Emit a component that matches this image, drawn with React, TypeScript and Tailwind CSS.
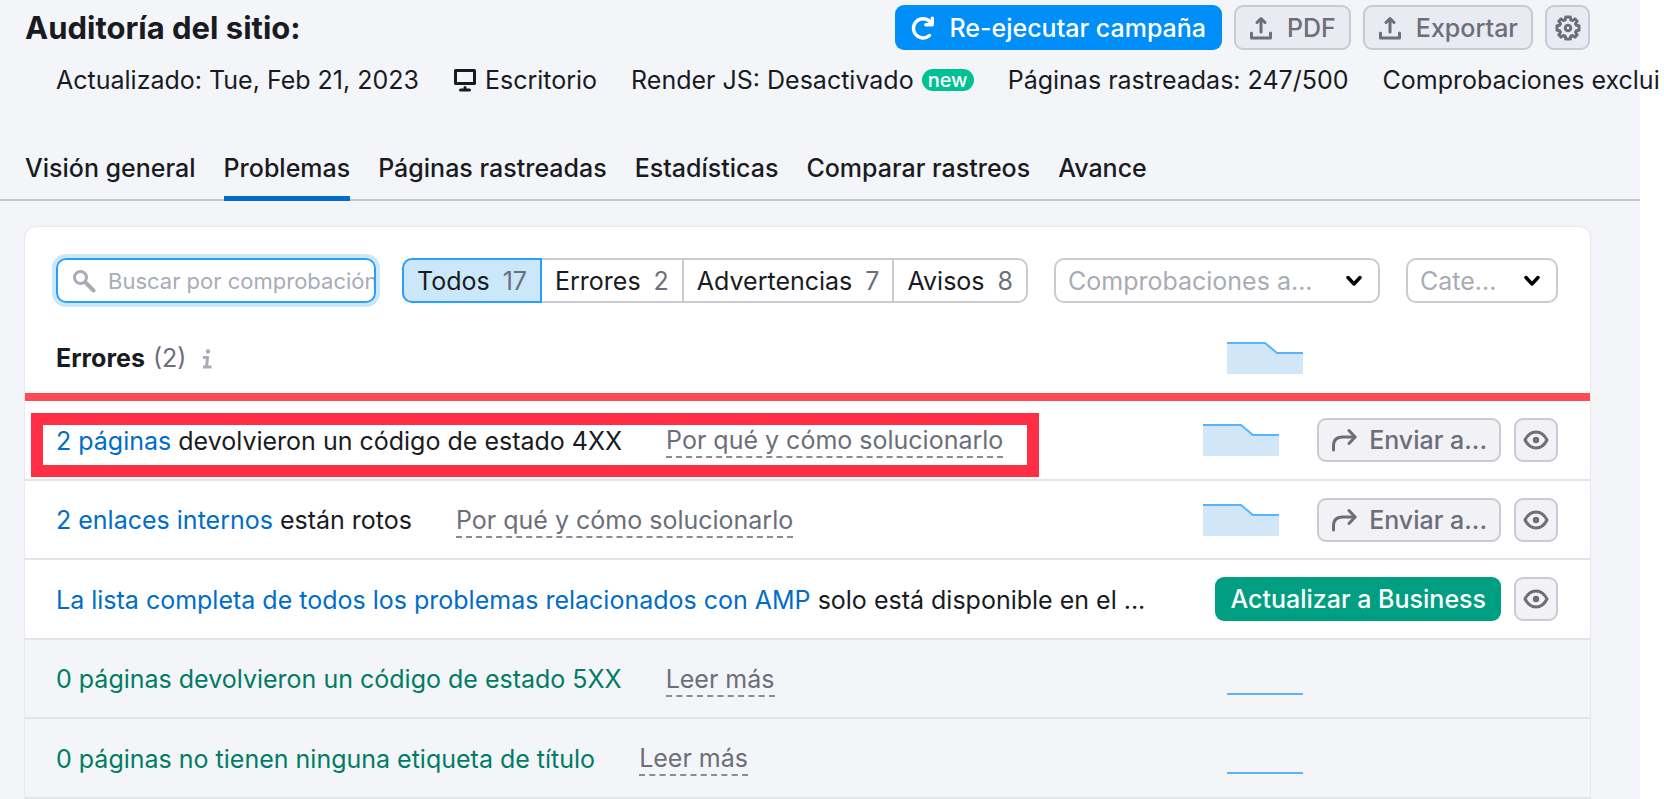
import React from "react";

interface Tab {
  label: string;
  active?: boolean;
}

interface Segment {
  label: string;
  count: number;
  active?: boolean;
}

interface Issue {
  id: number;
  link: string;
  text?: string;
  hint?: string;
  kind: "error" | "upgrade" | "passed";
  marked?: boolean;
}

const tabs: Tab[] = [
  { label: "Visión general" },
  { label: "Problemas", active: true },
  { label: "Páginas rastreadas" },
  { label: "Estadísticas" },
  { label: "Comparar rastreos" },
  { label: "Avance" },
];

const segments: Segment[] = [
  { label: "Todos", count: 17, active: true },
  { label: "Errores", count: 2 },
  { label: "Advertencias", count: 7 },
  { label: "Avisos", count: 8 },
];

const issues: Issue[] = [
  {
    id: 1,
    link: "2 páginas",
    text: "devolvieron un código de estado 4XX",
    hint: "Por qué y cómo solucionarlo",
    kind: "error",
    marked: true,
  },
  {
    id: 2,
    link: "2 enlaces internos",
    text: "están rotos",
    hint: "Por qué y cómo solucionarlo",
    kind: "error",
  },
  {
    id: 3,
    link: "La lista completa de todos los problemas relacionados con AMP",
    text: "solo está disponible en el ...",
    kind: "upgrade",
  },
  {
    id: 4,
    link: "0 páginas devolvieron un código de estado 5XX",
    hint: "Leer más",
    kind: "passed",
  },
  {
    id: 5,
    link: "0 páginas no tienen ninguna etiqueta de título",
    hint: "Leer más",
    kind: "passed",
  },
];

const grayButton =
  "flex items-center justify-center rounded-[9px] border-2 border-[#c9cbd4] font-medium text-[#6c6e79]";

const ReloadIcon = () => (
  <svg width="24" height="24" viewBox="0 0 24 24" fill="none" stroke="currentColor" strokeWidth="3.4" strokeLinecap="round">
    <path d="M18.500 19.500A9.600 9.600 0 1 1 18.800 5.500" />
    <path d="M21.300 2.200V8.800H14.800" strokeLinejoin="round" />
  </svg>
);

const UploadIcon = () => (
  <svg width="24" height="24" viewBox="0 0 24 24" fill="none" stroke="currentColor" strokeWidth="3" strokeLinecap="round" strokeLinejoin="round">
    <path d="M2.500 17v5h19v-5" />
    <path d="M12 16V3M8 6.500L12 2.500l4 4" />
  </svg>
);

const GearIcon = () => (
  <svg width="26" height="26" viewBox="0 0 26 26" fill="none" stroke="currentColor" strokeWidth="3" strokeLinejoin="round">
    <path d="M10.700 2h4.600l.5 2.900 1.700.7 2.400-1.700 2.300 2.300-1.700 2.400.7 1.700 2.800.5v4.400l-2.800.5-.7 1.700 1.700 2.400-2.300 2.300-2.400-1.700-1.700.7-.5 2.900h-4.600l-.5-2.900-1.700-.7-2.400 1.700-2.300-2.300 1.700-2.400-.7-1.700L2 15.200v-4.400l2.800-.5.7-1.700-1.700-2.400 2.300-2.300 2.400 1.700 1.700-.7z" />
    <circle cx="13" cy="13" r="2.800" />
  </svg>
);

const MonitorIcon = () => (
  <svg width="24" height="24" viewBox="0 0 24 24" fill="none" stroke="currentColor" strokeWidth="3" strokeLinecap="round" strokeLinejoin="round">
    <path d="M2.500 2.500h19v13h-19z" />
    <path d="M12 19.500v2.500M7.500 22h9" />
  </svg>
);

const SearchIcon = () => (
  <svg width="24" height="24" viewBox="0 0 24 24" fill="none" stroke="currentColor" strokeLinecap="round">
    <circle cx="8.500" cy="8.500" r="6" strokeWidth="3" />
    <path d="M13.500 13.500l8 8" strokeWidth="4" />
  </svg>
);

const ChevronIcon = () => (
  <svg width="16" height="12" viewBox="0 0 16 12" fill="none" stroke="currentColor" strokeWidth="3.400" strokeLinecap="round" strokeLinejoin="round">
    <path d="M2 2.500l6 6.500 6-6.500" />
  </svg>
);

const InfoIcon = () => (
  <svg width="12" height="20" viewBox="0 0 12 20" fill="none" stroke="currentColor" strokeWidth="3">
    <path d="M1 8.500h4.500L4.500 18M1 18h8.500" />
    <circle cx="6" cy="2.500" r="2.200" fill="currentColor" stroke="none" />
  </svg>
);

const ShareIcon = () => (
  <svg width="26" height="24" viewBox="0 0 26 24" fill="none" stroke="currentColor" strokeWidth="3" strokeLinecap="round" strokeLinejoin="round">
    <path d="M2.500 22v-4c0-6 3-9 9-9H24" />
    <path d="M18 2.500L24 9l-6 6.500" />
  </svg>
);

const EyeIcon = () => (
  <svg width="26" height="20" viewBox="0 0 26 20" fill="none" stroke="currentColor" strokeWidth="3">
    <path d="M2 10c2.500-5 6.500-8 11-8s8.500 3 11 8c-2.500 5-6.500 8-11 8s-8.500-3-11-8z" strokeLinejoin="round" />
    <circle cx="13" cy="10" r="3.200" fill="currentColor" stroke="none" />
  </svg>
);

const TrendChart = () => (
  <svg width="76" height="32" viewBox="0 0 76 32" className="shrink-0">
    <path d="M0 1h38l12 10h26v21H0z" fill="#d1e7f7" />
    <path d="M0 1h38l12 10h26" fill="none" stroke="#59b4fb" strokeWidth="2" />
  </svg>
);

const FlatChart = () => (
  <svg width="76" height="32" viewBox="0 0 76 32" className="shrink-0">
    <path d="M0 31h76" stroke="#59b4fb" strokeWidth="2" />
  </svg>
);

const Header: React.FC = () => (
  <header>
    <div className="flex items-center justify-between pt-[5px] pr-[50px] pl-[25px]">
      <h1 className="text-[31px] leading-11 font-bold">Auditoría del sitio:</h1>
      <div className="flex gap-3">
        <button className="flex h-[45px] items-center gap-[14px] rounded-[9px] bg-[#008ff8] px-4 font-medium text-white">
          <ReloadIcon />
          <span className="pt-[2px]">Re-ejecutar campaña</span>
        </button>
        <button className={`${grayButton} h-[45px] gap-[14px] bg-[#e9eaf2] px-[13px]`}>
          <UploadIcon />
          <span className="pt-[2px]">PDF</span>
        </button>
        <button className={`${grayButton} h-[45px] gap-[14px] bg-[#e9eaf2] px-[13px]`}>
          <UploadIcon />
          <span className="pt-[2px]">Exportar</span>
        </button>
        <button aria-label="Configuración" className={`${grayButton} h-[45px] w-[45px] bg-[#e9eaf2]`}>
          <GearIcon />
        </button>
      </div>
    </div>
    <div className="flex gap-[34px] pt-[14px] pl-14 leading-8 whitespace-nowrap">
      <span>Actualizado: Tue, Feb 21, 2023</span>
      <span className="flex items-center gap-2">
        <MonitorIcon />
        Escritorio
      </span>
      <span className="flex items-center gap-2">
        Render JS: Desactivado
        <span className="rounded-full bg-[#00c192] px-[6px] text-[20px] leading-[22px] font-medium text-white">new</span>
      </span>
      <span>Páginas rastreadas: 247/500</span>
      <span>Comprobaciones exclui</span>
    </div>
  </header>
);

const Tabs: React.FC = () => (
  <nav className="mt-14 flex gap-7 border-b-2 border-[#c4c7cf] pl-[25px]">
    {tabs.map((tab) => (
      <a
        key={tab.label}
        href="#"
        className={`-mb-[2px] border-b-[5px] pb-3 leading-8 font-medium ${
          tab.active ? "border-[#006dca]" : "border-transparent"
        }`}
      >
        {tab.label}
      </a>
    ))}
  </nav>
);

const Filters: React.FC = () => (
  <div className="flex gap-[26px]">
    <label className="flex h-[45px] w-80 items-center gap-3 overflow-hidden rounded-[10px] border-2 border-[#2b9dfa] pl-[14px] text-[#a9abb6] ring-4 ring-[#cbe8fb]">
      <SearchIcon />
      <input
        type="text"
        aria-label="Buscar por comprobación"
        placeholder="Buscar por comprobación"
        className="min-w-0 flex-1 pt-[2px] text-[22px] outline-none placeholder:text-[#a9abb6]"
      />
    </label>
    <div className="flex">
      {segments.map((segment) => (
        <button
          key={segment.label}
          className={`flex h-[45px] items-center gap-[13px] border-2 px-[13px] pt-[2px] first:rounded-l-[10px] last:rounded-r-[10px] ${
            segment.active ? "border-[#2b9dfa] bg-[#cbe8fb]" : "border-l-0 border-[#c9cbd0]"
          }`}
        >
          {segment.label}
          <span className="text-[#6c6e79]">{segment.count}</span>
        </button>
      ))}
    </div>
    <div className="relative flex-1 text-black">
      <select
        aria-label="Comprobaciones"
        className="h-[45px] w-full appearance-none rounded-[10px] border-2 border-[#c9cbd0] bg-white pt-[2px] pl-3 text-[#a9abb6]"
      >
        <option>Comprobaciones a...</option>
      </select>
      <span className="pointer-events-none absolute inset-y-0 right-[18px] flex items-center">
        <ChevronIcon />
      </span>
    </div>
    <div className="relative w-[152px] text-black">
      <select
        aria-label="Categoría"
        className="h-[45px] w-full appearance-none rounded-[10px] border-2 border-[#c9cbd0] bg-white pt-[2px] pl-3 text-[#a9abb6]"
      >
        <option>Cate...</option>
      </select>
      <span className="pointer-events-none absolute inset-y-0 right-[18px] flex items-center">
        <ChevronIcon />
      </span>
    </div>
  </div>
);

const IssueRow: React.FC<{ issue: Issue }> = ({ issue }) => {
  const passed = issue.kind === "passed";

  return (
    <li
      className={`relative flex h-20 items-center justify-between border-b-2 border-[#e3e4ea] pl-[31px] whitespace-nowrap even:h-[79px] ${
        passed ? "bg-[#f4f5f9] pr-[287px]" : "pr-8"
      }`}
    >
      <div className="flex items-center gap-11 pt-[3px]">
        <p>
          <a href="#" className={passed ? "text-[#007c65]" : "text-[#006dca]"}>
            {issue.link}
          </a>{" "}
          {issue.text}
        </p>
        {issue.hint && (
          <button className="border-b-2 border-dashed border-[#8a8c95] leading-[31px] text-[#6c6e79]">
            {issue.hint}
          </button>
        )}
      </div>
      {passed && <FlatChart />}
      {!passed && (
        <div className="flex items-center gap-[13px]">
          {issue.kind === "error" && (
            <>
              <TrendChart />
              <button className={`${grayButton} ml-[25px] h-11 gap-3 bg-[#f2f2f6] px-3`}>
                <ShareIcon />
                <span className="pt-[2px]">Enviar a...</span>
              </button>
            </>
          )}
          {issue.kind === "upgrade" && (
            <button className="h-11 rounded-[9px] bg-[#009f81] px-[15px] pt-[2px] font-medium text-white">
              Actualizar a Business
            </button>
          )}
          <button aria-label="Ocultar" className={`${grayButton} h-11 w-11 bg-[#f2f2f6]`}>
            <EyeIcon />
          </button>
        </div>
      )}
      {issue.marked && (
        <div className="pointer-events-none absolute top-3 left-[6px] h-16 w-[1008px] border-12 border-[#ff2e44]" />
      )}
    </li>
  );
};

const App: React.FC = () => {
  return (
    <div className="h-screen overflow-hidden bg-white font-['Inter',sans-serif] text-[25px] text-[#191b23]">
      <div className="mr-6 min-h-full bg-[#f4f5f9]">
        <Header />
        <Tabs />
        <section className="mt-[26px] mr-[50px] ml-[25px] rounded-t-[10px] bg-white shadow-[0_0_2px_rgba(25,27,35,0.2)]">
          <div className="pt-[31px] pr-8 pl-[31px]">
            <Filters />
          </div>
          <div className="flex h-[98px] items-center justify-between border-b-8 border-[#ff4953] pt-5 pr-[287px] pl-[31px]">
            <h2 className="flex items-center gap-2 pt-[2px] font-bold">
              Errores
              <span className="font-normal text-[#6c6e79]">(2)</span>
              <span className="ml-2 text-[#a9abb6]">
                <InfoIcon />
              </span>
            </h2>
            <TrendChart />
          </div>
          <ul>
            {issues.map((issue) => (
              <IssueRow key={issue.id} issue={issue} />
            ))}
          </ul>
        </section>
      </div>
    </div>
  );
};

export default App;
